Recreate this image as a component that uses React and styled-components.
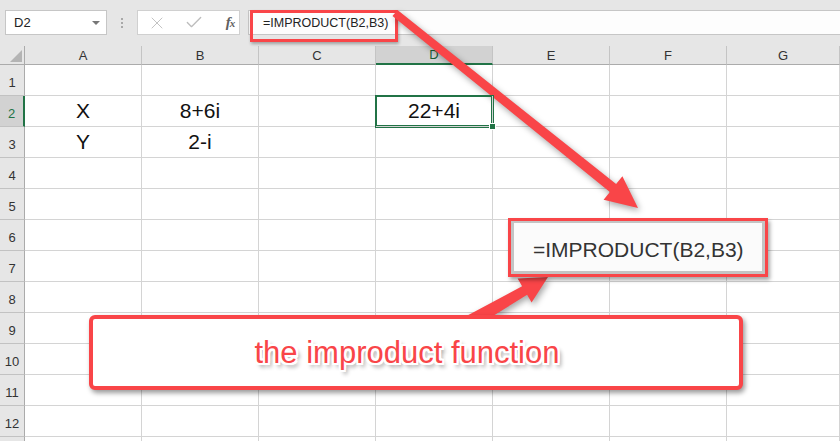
import React from "react";
import styled, { createGlobalStyle } from "styled-components";
import { X, Check } from "lucide-react";

const RED = "#f94548";
const GREEN = "#217346";

const GlobalStyle = createGlobalStyle`
  html, body {
    margin: 0;
    padding: 0;
    background: #fff;
    overflow: hidden;
  }
  body {
    font-family: "Liberation Sans", Arial, sans-serif;
  }
`;

const Page = styled.div`
  position: relative;
  width: 840px;
  height: 441px;
  overflow: hidden;
  background: #fff;
`;

const TopBar = styled.div`
  display: flex;
  align-items: flex-start;
  height: 46px;
  box-sizing: border-box;
  padding: 10px 0 0 5px;
  background: #e6e6e6;
`;

const NameBox = styled.div`
  width: 102px;
  height: 25px;
  box-sizing: border-box;
  display: flex;
  align-items: center;
  justify-content: space-between;
  padding: 0 6px 0 8px;
  background: #fff;
  border: 1px solid #c6c6c6;
  font-size: 13px;
  color: #222;
`;

const Caret = styled.span`
  width: 0;
  height: 0;
  border-left: 4px solid transparent;
  border-right: 4px solid transparent;
  border-top: 4px solid #777;
`;

const Grip = styled.div`
  width: 30px;
  height: 25px;
  display: flex;
  flex-direction: column;
  align-items: center;
  justify-content: center;
  gap: 2px;
`;

const GripDot = styled.span`
  width: 2px;
  height: 2px;
  background: #a8a8a8;
`;

const FxBox = styled.div`
  width: 103px;
  height: 25px;
  box-sizing: border-box;
  display: flex;
  align-items: center;
  gap: 17px;
  padding-left: 9px;
  background: #fff;
  border: 1px solid #d0d0d0;
  color: #bdbdbd;
`;

const FxIcon = styled.span`
  width: 20px;
  display: flex;
  justify-content: center;
  align-items: center;
`;

const FxLabel = styled.span`
  font-family: "Liberation Serif", "Times New Roman", serif;
  font-style: italic;
  font-weight: bold;
  font-size: 15px;
  color: #606060;
  letter-spacing: -1px;

  small {
    font-size: 11px;
  }
`;

const FormulaInput = styled.div`
  flex: 1;
  height: 25px;
  box-sizing: border-box;
  margin-left: 8px;
  display: flex;
  align-items: center;
  padding-left: 14px;
  background: #fdfdfd;
  border-top: 1px solid #c6c6c6;
  border-bottom: 1px solid #c6c6c6;
  border-left: 1px solid #c6c6c6;
  font-size: 12.5px;
  color: #222;
`;

const Sheet = styled.div`
  display: grid;
  grid-template-columns: 25px repeat(6, 117px) 1fr;
  grid-template-rows: 19px;
  grid-auto-rows: 31px;
`;

const Corner = styled.div`
  background: #e6e6e6;
  border-right: 1px solid #ababab;
  border-bottom: 1px solid #ababab;
  display: flex;
  align-items: flex-end;
  justify-content: flex-end;
  padding: 0 2px 2px 0;
`;

const ColHead = styled.div`
  display: flex;
  align-items: center;
  justify-content: center;
  background: ${(p) => (p.$active ? "#d2d2d2" : "#e6e6e6")};
  border-right: 1px solid #c4c4c4;
  border-bottom: ${(p) => (p.$active ? `2px solid ${GREEN}` : "1px solid #ababab")};
  font-size: 13px;
  color: ${(p) => (p.$active ? "#1e5e38" : "#333")};
`;

const RowHead = styled.div`
  display: flex;
  align-items: flex-end;
  justify-content: center;
  padding-bottom: 5px;
  box-sizing: border-box;
  background: ${(p) => (p.$active ? "#d2d2d2" : "#e6e6e6")};
  border-right: ${(p) => (p.$active ? `2px solid ${GREEN}` : "1px solid #ababab")};
  border-bottom: 1px solid #c2c2c2;
  font-size: 13px;
  color: ${(p) => (p.$active ? GREEN : "#333")};
`;

const Cell = styled.div`
  position: relative;
  display: flex;
  align-items: flex-end;
  justify-content: center;
  padding-bottom: 3px;
  box-sizing: border-box;
  border-right: 1px solid #d4d4d4;
  border-bottom: 1px solid #d4d4d4;
  font-size: 21px;
  color: #111;

  ${(p) =>
    p.$selected &&
    `
    z-index: 1;
    box-shadow: 0 0 0 1px ${GREEN}, inset 0 0 0 1px ${GREEN};
    &::after {
      content: "";
      position: absolute;
      right: -4px;
      bottom: -4px;
      width: 5px;
      height: 5px;
      background: ${GREEN};
      border: 1px solid #fff;
    }
  `}
`;

const FormulaMark = styled.div`
  position: absolute;
  left: 250px;
  top: 10px;
  width: 148px;
  height: 32px;
  box-sizing: border-box;
  border: 3px solid ${RED};
  box-shadow: 1px 2px 3px rgba(0, 0, 0, 0.3);
`;

const Arrows = styled.svg`
  position: absolute;
  left: 0;
  top: 0;
  pointer-events: none;
  filter: drop-shadow(2px 3px 3px rgba(0, 0, 0, 0.35));
`;

const ZoomBox = styled.div`
  position: absolute;
  left: 508px;
  top: 218px;
  width: 260px;
  height: 59px;
  box-sizing: border-box;
  border: 3px solid ${RED};
  box-shadow: 2px 3px 4px rgba(0, 0, 0, 0.35);
  background: #fff;
`;

const ZoomInner = styled.div`
  height: 100%;
  box-sizing: border-box;
  display: flex;
  align-items: center;
  padding: 5px 0 0 19px;
  background: #fbfbfb;
  border: 3px solid #c4c4c4;
  border-top-width: 2px;
  font-size: 21px;
  color: #333;
`;

const Callout = styled.div`
  position: absolute;
  left: 89px;
  top: 315px;
  width: 654px;
  height: 75px;
  box-sizing: border-box;
  display: flex;
  align-items: center;
  justify-content: center;
  padding-right: 18px;
  background: #fff;
  border: 4px solid ${RED};
  border-radius: 6px;
  box-shadow: 2px 3px 5px rgba(0, 0, 0, 0.4);
`;

const CalloutText = styled.span`
  font-size: 31px;
  color: ${RED};
  text-shadow: -2px -2px 0 #fff, 2px -2px 0 #fff, -2px 2px 0 #fff,
    2px 2px 0 #fff, 0 -2px 0 #fff, 0 2px 0 #fff, -2px 0 0 #fff, 2px 0 0 #fff,
    3px 4px 4px rgba(0, 0, 0, 0.45);
`;

const columns = ["A", "B", "C", "D", "E", "F", "G"];
const data = {
  2: { A: "X", B: "8+6i", D: "22+4i" },
  3: { A: "Y", B: "2-i" },
};
// row 13 only shows its top edge in the window
const rows = Array.from({ length: 13 }, (_, i) => i + 1);

const App = () => {
  return (
    <Page>
      <GlobalStyle />
      <TopBar>
        <NameBox>
          D2
          <Caret />
        </NameBox>
        <Grip>
          <GripDot />
          <GripDot />
          <GripDot />
        </Grip>
        <FxBox>
          <FxIcon>
            <X size={22} strokeWidth={1.1} />
          </FxIcon>
          <FxIcon>
            <Check size={21} strokeWidth={1.6} />
          </FxIcon>
          <FxIcon>
            <FxLabel>
              f<small>x</small>
            </FxLabel>
          </FxIcon>
        </FxBox>
        <FormulaInput>=IMPRODUCT(B2,B3)</FormulaInput>
      </TopBar>

      <Sheet>
        <Corner>
          <svg width="12" height="12" viewBox="0 0 12 12">
            <polygon points="0,12 12,12 12,0" fill="#b4b4b4" />
          </svg>
        </Corner>
        {columns.map((c) => (
          <ColHead key={c} $active={c === "D"}>
            {c}
          </ColHead>
        ))}
        {rows.map((r) => (
          <React.Fragment key={r}>
            <RowHead $active={r === 2}>{r < 13 ? r : ""}</RowHead>
            {columns.map((c) => (
              <Cell key={c} $selected={r === 2 && c === "D"}>
                {data[r] && data[r][c]}
              </Cell>
            ))}
          </React.Fragment>
        ))}
      </Sheet>

      <FormulaMark />

      <Arrows width="840" height="441" viewBox="0 0 840 441">
        <polygon
          points="397.5,9.9 616.1,184.1 622.4,176.3 638,208 603.6,199.7 609.9,191.9 392.5,16.1"
          fill={RED}
        />
        <polygon
          points="466.5,315.9 522.1,286.2 517.6,278.4 548,277 531.6,302.6 527.1,294.8 473.5,328.1"
          fill={RED}
        />
      </Arrows>

      <ZoomBox>
        <ZoomInner>=IMPRODUCT(B2,B3)</ZoomInner>
      </ZoomBox>

      <Callout>
        <CalloutText>the improduct function</CalloutText>
      </Callout>
    </Page>
  );
};

export default App;
